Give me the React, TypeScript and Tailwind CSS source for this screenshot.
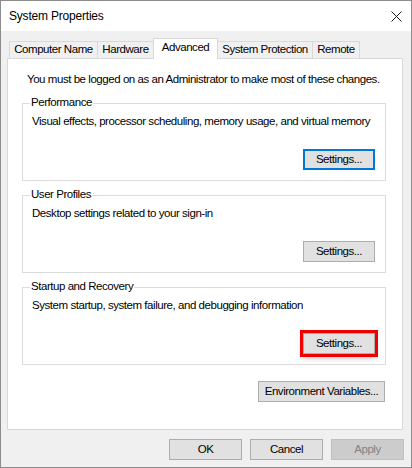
import React from 'react'

const font = { fontFamily: '"Liberation Sans", Arial, sans-serif' }

function Button({
  label,
  width,
  variant = 'normal',
}: {
  label: string
  width: string
  variant?: 'normal' | 'focus' | 'disabled'
}) {
  const cls =
    variant === 'focus'
      ? 'border-2 border-[#0078d7] bg-[#e1e1e1] text-black'
      : variant === 'disabled'
        ? 'border border-[#bfbfbf] bg-[#cccccc] text-[#838383]'
        : 'border border-[#adadad] bg-[#e1e1e1] text-black'
  return (
    <div className={`${width} h-[21px] flex items-center justify-center ${cls}`}>
      <span className="leading-[15px]">{label}</span>
    </div>
  )
}

function GroupBox({
  title,
  text,
  children,
}: {
  title: string
  text: string
  children: React.ReactNode
}) {
  return (
    <div className="relative h-[78px] border border-[#dcdcdc]">
      <span className="absolute -top-[9px] left-[7px] bg-white px-[1px] leading-[15px]">{title}</span>
      <p className="pl-[9px] pt-[10px] leading-[15px]">{text}</p>
      <div className="mt-[20px] flex justify-end pr-[10px]">{children}</div>
    </div>
  )
}

export default function App() {
  return (
    <div
      className="flex h-[468px] w-[412px] flex-col whitespace-nowrap border border-[#8c8c8c] bg-[#f0f0f0] text-[11.5px] tracking-[-0.45px] text-black"
      style={font}
    >
      {/* title bar */}
      <div className="flex h-[30px] shrink-0 items-center justify-between bg-white pl-[8px] pr-[9px]">
        <span className="text-[12px] leading-[15px] tracking-[-0.2px]">System Properties</span>
        <svg width="11" height="11" viewBox="0 0 11 11" className="mt-[1px]">
          <path d="M0.5 0.5 L10.5 10.5 M10.5 0.5 L0.5 10.5" stroke="#1a1a1a" strokeWidth="1" fill="none" />
        </svg>
      </div>

      <div className="ml-[6px] w-[396px]">
        {/* tabs */}
        <div className="relative z-10 mt-[7px] flex h-[20px] items-end pl-[2px]">
          <div className="flex h-[17px] w-[88px] items-center justify-center border-l border-t border-[#d9d9d9]">
            Computer Name
          </div>
          <div className="flex h-[17px] w-[56px] items-center justify-center border-l border-t border-[#d9d9d9]">
            Hardware
          </div>
          <div className="-mb-px flex h-[21px] w-[65px] items-center justify-center border-x border-t border-[#d9d9d9] bg-white pb-[2px]">
            Advanced
          </div>
          <div className="flex h-[17px] w-[94px] items-center justify-center border-t border-[#d9d9d9]">
            System Protection
          </div>
          <div className="flex h-[17px] w-[48px] items-center justify-center border-x border-t border-[#d9d9d9]">
            Remote
          </div>
        </div>

        {/* tab panel */}
        <div className="h-[372px] border border-[#d9d9d9] bg-white pl-[14px] pr-[16px] pt-[13px]">
          <p className="ml-[5px] leading-[15px]">
            You must be logged on as an Administrator to make most of these changes.
          </p>

          <div className="mt-[16px] flex flex-col gap-[14px]">
            <GroupBox title="Performance" text="Visual effects, processor scheduling, memory usage, and virtual memory">
              <Button label="Settings..." width="w-[72px]" variant="focus" />
            </GroupBox>
            <GroupBox title="User Profiles" text="Desktop settings related to your sign-in">
              <Button label="Settings..." width="w-[72px]" />
            </GroupBox>
            <GroupBox title="Startup and Recovery" text="System startup, system failure, and debugging information">
              <div className="relative shadow-[0_3px_6px_rgba(0,0,0,0.35)]">
                <div className="shadow-[inset_0_0_4px_rgba(0,0,0,0.35)]">
                  <Button label="Settings..." width="w-[72px]" />
                </div>
                <div className="pointer-events-none absolute -inset-[3px] border-[3px] border-[#ee0000]" />
              </div>
            </GroupBox>
          </div>

          <div className="mt-[16px] flex justify-end pr-[1px]">
            <Button label="Environment Variables..." width="w-[127px]" />
          </div>
        </div>
      </div>

      {/* dialog buttons */}
      <div className="mt-[9px] flex justify-end gap-[8px] pr-[7px]">
        <Button label="OK" width="w-[73px]" />
        <Button label="Cancel" width="w-[73px]" />
        <Button label="Apply" width="w-[73px]" variant="disabled" />
      </div>
    </div>
  )
}
